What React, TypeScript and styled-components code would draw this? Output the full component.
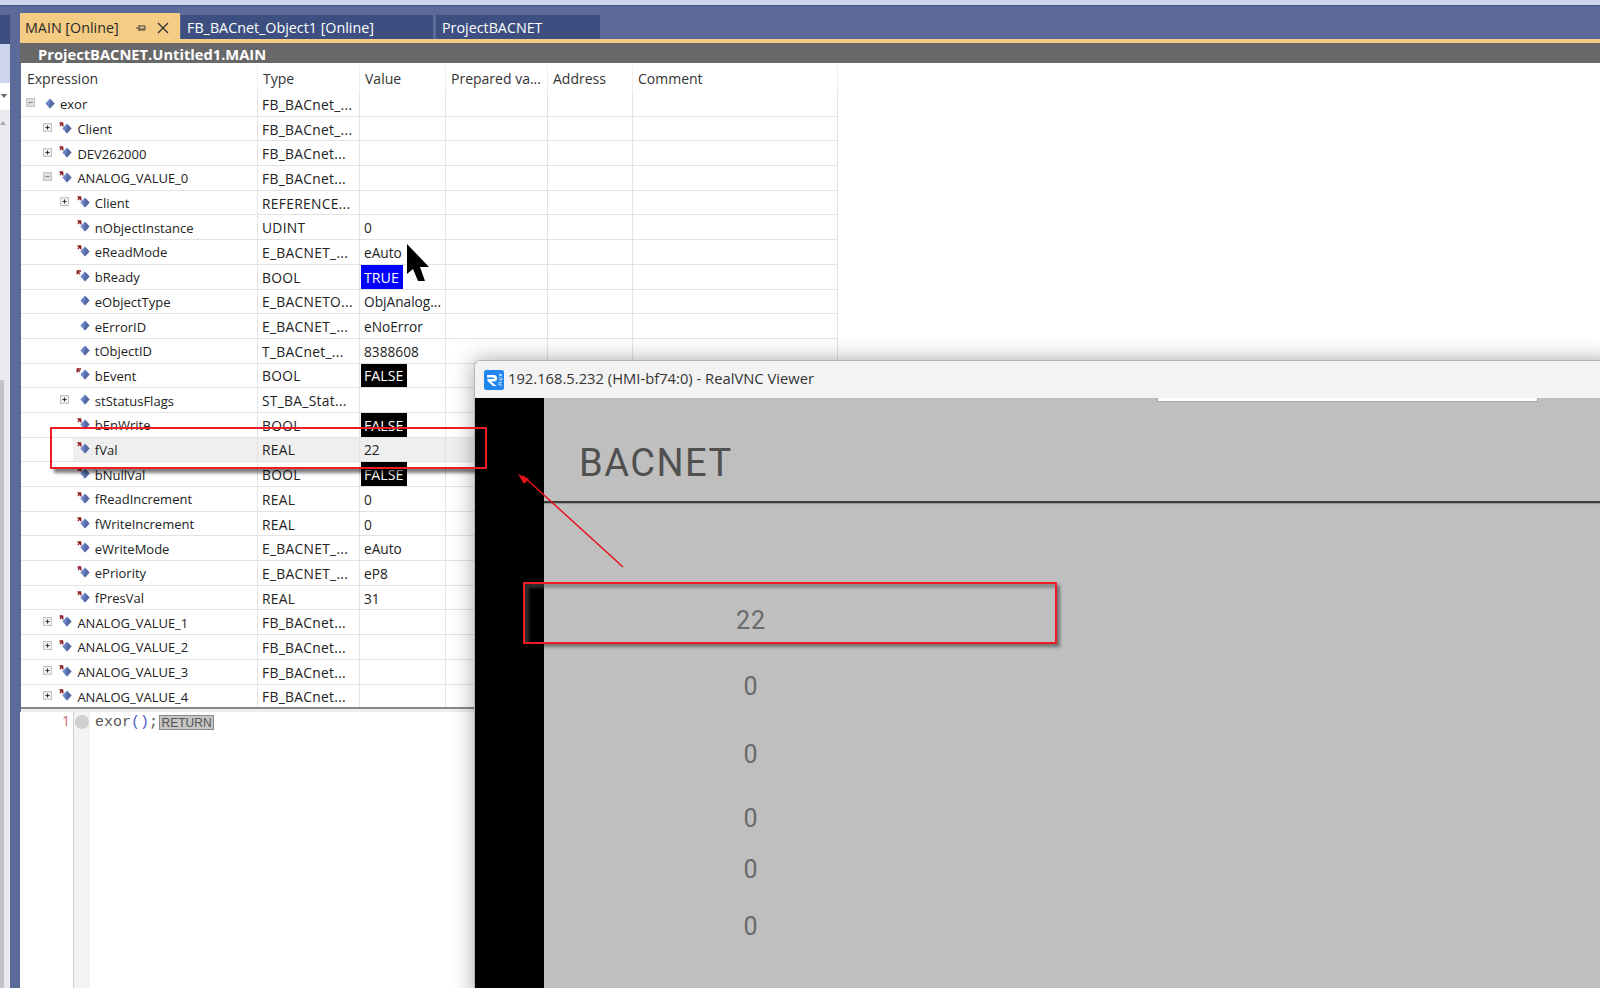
import React from "react";
import styled, { createGlobalStyle } from "styled-components";

type Kind = "plain" | "input" | "output";

interface Row {
  name: string;
  type: string;
  value?: string;
  chip?: "on" | "off";
  level: number;
  toggle?: "plus" | "minus";
  kind: Kind;
  active?: boolean;
}

const rows: Row[] = [
  { name: "exor", type: "FB_BACnet_...", level: 0, toggle: "minus", kind: "plain" },
  { name: "Client", type: "FB_BACnet_...", level: 1, toggle: "plus", kind: "input" },
  { name: "DEV262000", type: "FB_BACnet...", level: 1, toggle: "plus", kind: "input" },
  { name: "ANALOG_VALUE_0", type: "FB_BACnet...", level: 1, toggle: "minus", kind: "input" },
  { name: "Client", type: "REFERENCE...", level: 2, toggle: "plus", kind: "input" },
  { name: "nObjectInstance", type: "UDINT", value: "0", level: 2, kind: "input" },
  { name: "eReadMode", type: "E_BACNET_...", value: "eAuto", level: 2, kind: "input" },
  { name: "bReady", type: "BOOL", value: "TRUE", chip: "on", level: 2, kind: "output" },
  { name: "eObjectType", type: "E_BACNETO...", value: "ObjAnalog...", level: 2, kind: "plain" },
  { name: "eErrorID", type: "E_BACNET_...", value: "eNoError", level: 2, kind: "plain" },
  { name: "tObjectID", type: "T_BACnet_...", value: "8388608", level: 2, kind: "plain" },
  { name: "bEvent", type: "BOOL", value: "FALSE", chip: "off", level: 2, kind: "output" },
  { name: "stStatusFlags", type: "ST_BA_Stat...", level: 2, toggle: "plus", kind: "plain" },
  { name: "bEnWrite", type: "BOOL", value: "FALSE", chip: "off", level: 2, kind: "input" },
  { name: "fVal", type: "REAL", value: "22", level: 2, kind: "input", active: true },
  { name: "bNullVal", type: "BOOL", value: "FALSE", chip: "off", level: 2, kind: "input" },
  { name: "fReadIncrement", type: "REAL", value: "0", level: 2, kind: "input" },
  { name: "fWriteIncrement", type: "REAL", value: "0", level: 2, kind: "input" },
  { name: "eWriteMode", type: "E_BACNET_...", value: "eAuto", level: 2, kind: "input" },
  { name: "ePriority", type: "E_BACNET_...", value: "eP8", level: 2, kind: "input" },
  { name: "fPresVal", type: "REAL", value: "31", level: 2, kind: "input" },
  { name: "ANALOG_VALUE_1", type: "FB_BACnet...", level: 1, toggle: "plus", kind: "input" },
  { name: "ANALOG_VALUE_2", type: "FB_BACnet...", level: 1, toggle: "plus", kind: "input" },
  { name: "ANALOG_VALUE_3", type: "FB_BACnet...", level: 1, toggle: "plus", kind: "input" },
  { name: "ANALOG_VALUE_4", type: "FB_BACnet...", level: 1, toggle: "plus", kind: "input" },
];

const headers = ["Expression", "Type", "Value", "Prepared va...", "Address", "Comment"];

const hmiValues = [
  { text: "22", gap: 103 },
  { text: "0", gap: 36 },
  { text: "0", gap: 38 },
  { text: "0", gap: 34 },
  { text: "0", gap: 21 },
  { text: "0", gap: 27 },
];

const VarIcon = ({ kind }: { kind: Kind }) => (
  <IconSvg viewBox="0 0 14 12" width="14" height="12">
    {kind === "input" && (
      <path d="M1.5 1 L4.5 1 L5 4.5 M2 4 L4 1.5" stroke="#8c1a22" strokeWidth="1.4" fill="none" />
    )}
    {kind === "output" && (
      <path d="M5 1 L1.2 1 L1.2 4.5 M1.5 1.5 L4 4" stroke="#8c1a22" strokeWidth="1.3" fill="none" />
    )}
    <path d="M9 1.6 L13.6 6.5 L9 11.4 L4.4 6.5 Z" fill="#6a83c8" />
    <path d="M9.8 2.4 L13.6 6.5 L9 11.4 L7.6 9.9 Z" fill="#3f4f7e" opacity="0.5" />
  </IconSvg>
);

const Toggle = ({ mode }: { mode: "plus" | "minus" }) => (
  <ToggleBox viewBox="0 0 9 9" width="9" height="9">
    <rect x="0.5" y="0.5" width="8" height="8" fill={mode === "plus" ? "#eeeeee" : "#dddddd"} stroke="#c4c4c4" />
    <path d={mode === "plus" ? "M2.5 4.5 H6.5 M4.5 2.5 V6.5" : "M2.5 4.5 H6.5"} stroke={mode === "plus" ? "#333" : "#888"} />
  </ToggleBox>
);

const VncLogo = () => (
  <svg viewBox="0 0 20 20" width="20" height="20">
    <rect width="20" height="20" rx="2.5" fill="#2186ee" />
    <path d="M3 5 H10 Q13 5 13 8.5 Q13 11.5 10 11.5 H7 L12.5 16 H9 L3.5 11 V9 H9.5 Q10.2 9 10.2 8.3 Q10.2 7.6 9.5 7.6 H3 Z" fill="#fff" />
    <path d="M15 4 L18 5 L15 6 M15 8 H18 V10 H15 M15 12.5 H18 M15 12.5 V15 H18" stroke="#cfe5fb" strokeWidth="0.9" fill="none" />
  </svg>
);

const App = () => {
  return (
    <Page>
      <GlobalStyle />
      <TopStrip />
      <Body>
        <SideDock>
          <DockTab />
          <DockPale />
          <DockSelect>
            <svg viewBox="0 0 8 5" width="8" height="5">
              <path d="M0 0 H6 L3 4 Z" fill="#666" />
            </svg>
          </DockSelect>
          <DockArrow>
            <svg viewBox="0 0 8 5" width="8" height="5">
              <path d="M0 5 L3 1 L6 5 Z" fill="#aaa" />
            </svg>
          </DockArrow>
          <DockRail />
        </SideDock>
        <Gutter />
        <Main>
          <TabBar>
            <ActiveTab>
              <TabLabel>MAIN [Online]</TabLabel>
              <svg viewBox="0 0 12 12" width="12" height="12">
                <path d="M1 6 H4 M4 3 V9 M4 4 H10 V8 H4 M4 7 H10" stroke="#444" fill="none" />
              </svg>
              <svg viewBox="0 0 12 12" width="12" height="12">
                <path d="M1 1 L11 11 M11 1 L1 11" stroke="#333" strokeWidth="1.4" />
              </svg>
            </ActiveTab>
            <Tab $width={252}>FB_BACnet_Object1 [Online]</Tab>
            <Tab $width={164}>ProjectBACNET</Tab>
          </TabBar>
          <TabRule />
          <PathBar>ProjectBACNET.Untitled1.MAIN</PathBar>
          <WatchTable>
            <HeaderRow>
              {headers.map((h) => (
                <HeaderCell key={h}>{h}</HeaderCell>
              ))}
            </HeaderRow>
            {rows.map((r, i) => (
              <DataRow key={i}>
                <NameCell $level={r.level} $active={r.active}>
                  <ToggleSlot>{r.toggle && <Toggle mode={r.toggle} />}</ToggleSlot>
                  <VarIcon kind={r.kind} />
                  <span>{r.name}</span>
                </NameCell>
                <TypeCell $active={r.active}>{r.type}</TypeCell>
                <ValueCell $active={r.active}>
                  {r.chip ? <Chip $on={r.chip === "on"}>{r.value}</Chip> : r.value}
                </ValueCell>
                <Cell $active={r.active} />
                <Cell $active={r.active} />
                <Cell $active={r.active} />
              </DataRow>
            ))}
          </WatchTable>
          <Splitter />
          <CodePane>
            <LineNo>1</LineNo>
            <Margin>
              <Breakpoint />
            </Margin>
            <CodeLine>
              exor<Paren>()</Paren>;<ReturnTag>RETURN</ReturnTag>
            </CodeLine>
          </CodePane>
        </Main>
      </Body>

      <Cursor viewBox="0 0 24 38" width="24" height="38">
        <path d="M1 0 L23 23 L14 23 L19 37 L12 37 L7 25 L1 30 Z" fill="#000" />
      </Cursor>

      <VncWindow>
        <TitleBar>
          <VncLogo />
          <WindowTitle>192.168.5.232 (HMI-bf74:0) - RealVNC Viewer</WindowTitle>
        </TitleBar>
        <RemoteArea>
          <BlackBar />
          <Screen>
            <MenuEdge />
            <ScreenHeader>
              <ScreenTitle>BACNET</ScreenTitle>
            </ScreenHeader>
            {hmiValues.map((v, i) => (
              <HmiValue key={i} $gap={v.gap}>
                {v.text}
              </HmiValue>
            ))}
          </Screen>
        </RemoteArea>
      </VncWindow>

      <FieldMark />
      <ScreenMark />
      <ArrowMark viewBox="0 0 110 100" width="110" height="100">
        <path d="M105 93 L5 2" stroke="#e8131c" strokeWidth="1.5" fill="none" />
        <path d="M0 0 L11 5 L6 10 Z" fill="#e8131c" />
      </ArrowMark>
    </Page>
  );
};

export default App;

const GlobalStyle = createGlobalStyle`
  html, body {
    margin: 0;
    padding: 0;
    background: #fff;
  }
`;

const Page = styled.div`
  position: relative;
  width: 1600px;
  height: 988px;
  overflow: hidden;
  background: #5c6a99;
  font-family: "Open Sans", "Liberation Sans", sans-serif;
  color: #222;
`;

const TopStrip = styled.div`
  height: 6px;
  background: #cdd6ee;
  border-bottom: 1px solid #46547f;
  box-sizing: border-box;
`;

const Body = styled.div`
  display: flex;
  height: 982px;
`;

const SideDock = styled.div`
  width: 10px;
  display: flex;
  flex-direction: column;
  padding-top: 9px;
`;

const DockTab = styled.div`
  height: 29px;
  background: #3c4f80;
`;

const DockPale = styled.div`
  height: 39px;
  background: #ccd5ec;
`;

const DockSelect = styled.div`
  height: 27px;
  background: #fff;
  display: flex;
  align-items: center;
  padding-left: 1px;
`;

const DockArrow = styled.div`
  height: 270px;
  background: #e9e9ef;
  padding-top: 10px;
  box-sizing: border-box;
  svg {
    display: block;
  }
`;

const DockRail = styled.div`
  flex: 1;
  background: #e9e9ef;
  border-left: 4px solid #c1c3c8;
`;

const Gutter = styled.div`
  width: 11px;
`;

const Main = styled.div`
  flex: 1;
  display: flex;
  flex-direction: column;
  min-width: 0;
`;

const TabBar = styled.div`
  height: 33px;
  display: flex;
  align-items: flex-end;
  gap: 3px;
  font-size: 14.3px;
`;

const ActiveTab = styled.div`
  width: 160px;
  height: 26px;
  margin-left: -1px;
  margin-right: -2px;
  box-sizing: border-box;
  background: #f5cc84;
  color: #2a2a2a;
  display: flex;
  align-items: center;
  padding: 3px 0 0 5px;
  gap: 10px;
`;

const TabLabel = styled.span`
  width: 100px;
`;

const Tab = styled.div<{ $width: number }>`
  width: ${(p) => p.$width}px;
  height: 24px;
  box-sizing: border-box;
  background: #3c4f80;
  color: #fff;
  display: flex;
  align-items: center;
  padding: 1px 0 0 6px;
`;

const TabRule = styled.div`
  height: 4px;
  background: #f5cc84;
  margin-left: -1px;
`;

const PathBar = styled.div`
  height: 20px;
  background: #686868;
  color: #fff;
  font-size: 14.7px;
  font-weight: 700;
  line-height: 22px;
  padding-left: 18px;
  margin-left: -1px;
`;

const WatchTable = styled.div`
  height: 645px;
  overflow: hidden;
  background: #fff;
  padding-top: 2px;
  box-sizing: border-box;
  font-size: 13px;
`;

const columns = "237px 102px 86px 102px 85px 205px";

const HeaderRow = styled.div`
  display: grid;
  grid-template-columns: ${columns};
  height: 27px;
`;

const HeaderCell = styled.div`
  display: flex;
  align-items: center;
  padding-left: 5px;
  border-right: 1px solid #f0f0f0;
  font-size: 14px;
  color: #333;
  &:first-child {
    padding-left: 6px;
  }
`;

const DataRow = styled.div`
  display: grid;
  grid-template-columns: ${columns};
  height: 24.7px;
`;

const Cell = styled.div<{ $active?: boolean }>`
  display: flex;
  align-items: center;
  box-sizing: border-box;
  padding: 1px 0 0 5px;
  white-space: nowrap;
  overflow: hidden;
  border-right: 1px solid #e4e4e4;
  border-bottom: 1px solid #e2e2e2;
  background: ${(p) => (p.$active ? "#efefef" : "#fff")};
`;

const NameCell = styled(Cell)<{ $level: number }>`
  padding-left: ${(p) => 4.5 + p.$level * 17.4}px;
  background: ${(p) =>
    p.$active ? "linear-gradient(to right, #fff 52px, #efefef 52px)" : "#fff"};
`;

const TypeCell = styled(Cell)`
  padding-left: 4px;
  font-size: 13.8px;
  letter-spacing: 0.3px;
`;

const ValueCell = styled(Cell)`
  padding-left: 4px;
  font-size: 13.7px;
`;

const ToggleSlot = styled.span`
  width: 15.5px;
  height: 9px;
  flex: none;
  display: flex;
  margin-top: -3px;
`;

const ToggleBox = styled.svg`
  display: block;
`;

const IconSvg = styled.svg`
  flex: none;
  margin: -3px 5px 0 0;
`;

const Chip = styled.span<{ $on: boolean }>`
  align-self: stretch;
  margin: -1px 0 0 -3px;
  background: ${(p) => (p.$on ? "#0000ff" : "#000")};
  color: #fff;
  padding: 1px 4px 0 3px;
  display: flex;
  align-items: center;
  font-size: 14.2px;
`;

const Splitter = styled.div`
  height: 5px;
  background: #eeeeee;
  border-top: 2px solid #888;
  box-sizing: border-box;
  margin-top: -1px;
`;

const CodePane = styled.div`
  flex: 1;
  background: #fff;
  display: flex;
  margin-left: -1px;
`;

const LineNo = styled.div`
  width: 54px;
  box-sizing: border-box;
  text-align: right;
  padding: 0 3px 0 0;
  font-size: 14px;
  color: #c9606a;
  line-height: 18px;
  border-right: 1px solid #cfcfcf;
`;

const Margin = styled.div`
  width: 16px;
  background: #f3f3f3;
  padding: 3px 0 0 1px;
  box-sizing: border-box;
`;

const Breakpoint = styled.div`
  width: 14px;
  height: 14px;
  border-radius: 50%;
  background: #cfcfcf;
`;

const CodeLine = styled.div`
  padding: 2px 0 0 5px;
  font-family: "Liberation Mono", monospace;
  font-size: 15px;
  color: #555;
  display: flex;
  align-items: flex-start;
  line-height: 18px;
`;

const Paren = styled.span`
  color: #4a62c9;
`;

const ReturnTag = styled.span`
  box-sizing: border-box;
  width: 55px;
  height: 15px;
  margin: 1px 0 0 1px;
  background: #c6c6c6;
  border: 1px solid #8a8a8a;
  font-family: "Liberation Sans", sans-serif;
  font-size: 12px;
  line-height: 14px;
  text-align: center;
  color: #555;
`;

const Cursor = styled.svg`
  position: absolute;
  left: 406px;
  top: 244px;
`;

const VncWindow = styled.div`
  position: absolute;
  left: 474px;
  top: 360px;
  width: 1140px;
  height: 640px;
  display: flex;
  flex-direction: column;
  border-top: 1px solid #b5b5b5;
  border-left: 1px solid #b5b5b5;
  border-top-left-radius: 6px;
  box-shadow: 0 0 22px rgba(0, 0, 0, 0.35);
`;

const TitleBar = styled.div`
  height: 37px;
  flex: none;
  background: #f3f3f3;
  border-top-left-radius: 6px;
  display: flex;
  align-items: center;
  gap: 4px;
  padding-left: 9px;
`;

const WindowTitle = styled.span`
  font-size: 14.75px;
  color: #333;
  margin-top: -4px;
`;

const RemoteArea = styled.div`
  flex: 1;
  display: flex;
`;

const BlackBar = styled.div`
  width: 69px;
  background: #000;
`;

const Screen = styled.div`
  flex: 1;
  background: #bfbfbf;
`;

const MenuEdge = styled.div`
  width: 381px;
  height: 4px;
  margin-left: 613px;
  box-sizing: border-box;
  background: #fff;
  border: 1px solid #a4a4a4;
  border-top: none;
`;

const ScreenHeader = styled.div`
  height: 101px;
  box-sizing: border-box;
  padding: 37px 0 0 35px;
  border-bottom: 2px solid #3c3c3c;
  box-shadow: 0 1px 1px rgba(0, 0, 0, 0.2);
`;

const ScreenTitle = styled.div`
  font-family: Roboto, "Liberation Sans", sans-serif;
  font-size: 38px;
  line-height: 48px;
  letter-spacing: 1.5px;
  color: #505050;
`;

const HmiValue = styled.div<{ $gap: number }>`
  margin-top: ${(p) => p.$gap}px;
  width: 414px;
  height: 30px;
  line-height: 30px;
  text-align: center;
  font-family: Roboto, "Liberation Sans", sans-serif;
  font-size: 25px;
  letter-spacing: 1px;
  color: #6a6a6a;
`;

const FieldMark = styled.div`
  position: absolute;
  left: 50px;
  top: 427px;
  width: 437px;
  height: 42px;
  box-sizing: border-box;
  border: 2px solid #ee1c24;
  box-shadow: 4px 4px 3px rgba(0, 0, 0, 0.5);
`;

const ScreenMark = styled.div`
  position: absolute;
  left: 523px;
  top: 582px;
  width: 534px;
  height: 62px;
  box-sizing: border-box;
  border: 2px solid #ee1c24;
  box-shadow: 3px 3px 3px rgba(0, 0, 0, 0.4), inset 4px 4px 3px rgba(90, 90, 90, 0.5);
`;

const ArrowMark = styled.svg`
  position: absolute;
  left: 518px;
  top: 474px;
`;
